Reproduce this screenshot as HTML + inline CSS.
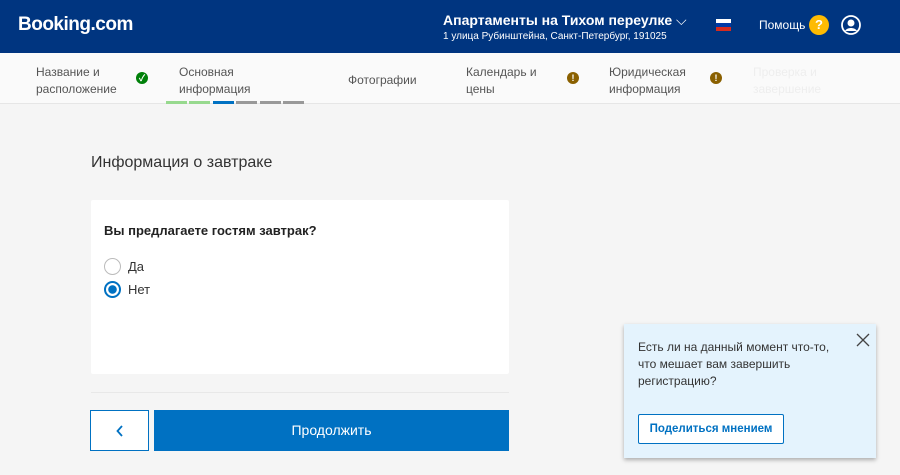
<!DOCTYPE html>
<html><head><meta charset="utf-8"><style>
*{margin:0;padding:0;box-sizing:border-box}
body{width:900px;height:475px;overflow:hidden;background:#f5f5f5;font-family:"Liberation Sans","Noto Sans CJK SC",sans-serif;position:relative;color:#333}
.hd{position:absolute;left:0;top:0;width:900px;height:53px;background:#003580;color:#fff}
.abs{position:absolute}
.nav{position:absolute;top:53px;left:0;width:900px;height:51px;background:#fafafa;border-bottom:1px solid #e6e6e6;font-size:12px;color:#555;line-height:17px}
.dot{position:absolute;width:12px;height:12px;border-radius:50%;color:#fff;font-size:9px;font-weight:bold;text-align:center;line-height:12px}
.bar{position:absolute;top:101px;height:3px;width:21px}
</style></head><body>
<div class="hd">
 <div class="abs" style="left:18px;top:14px;font-size:19px;font-weight:bold;letter-spacing:-0.5px">Booking.com</div>
 <div class="abs" style="left:443px;top:12px;font-size:14px;font-weight:bold">Апартаменты на Тихом переулке <span style="font-weight:normal">⌵</span></div>
 <div class="abs" style="left:443px;top:31px;font-size:10px">1 улица Рубинштейна, Санкт-Петербург, 191025</div>
 <div class="abs" style="left:716px;top:19px;width:15px;height:12px;background:linear-gradient(#fff 0 33%,#0039a6 33% 66%,#d52b1e 66%)"></div>
 <div class="abs" style="left:759px;top:18px;font-size:12px">Помощь</div>
 <div class="abs" style="left:809px;top:15px;width:20px;height:20px;border-radius:50%;background:#febb02;color:#fff;text-align:center;font-size:13px;line-height:20px;font-weight:bold">?</div>
 <svg class="abs" style="left:841px;top:15px" width="20" height="20" viewBox="0 0 20 20"><circle cx="10" cy="10" r="9" fill="none" stroke="#fff" stroke-width="1.8"/><circle cx="10" cy="8" r="3.5" fill="#fff"/><path d="M4 16c2-4 10-4 12 0" fill="#fff"/></svg>
</div>
<div class="nav">
 <div class="abs" style="left:36px;top:11px">Название и<br>расположение</div>
 <div class="dot" style="left:136px;top:19px;background:#008009">✓</div>
 <div class="abs" style="left:179px;top:11px">Основная<br>информация</div>
 <div class="abs" style="left:348px;top:19px">Фотографии</div>
 <div class="abs" style="left:466px;top:11px">Календарь и<br>цены</div>
 <div class="dot" style="left:567px;top:19px;background:#8a6000">!</div>
 <div class="abs" style="left:609px;top:11px">Юридическая<br>информация</div>
 <div class="dot" style="left:710px;top:19px;background:#8a6000">!</div>
 <div class="abs" style="left:753px;top:11px;color:#eee">Проверка и<br>завершение</div>
</div>
<div class="bar" style="left:166px;background:#97d98e"></div>
<div class="bar" style="left:189px;background:#97d98e"></div>
<div class="bar" style="left:213px;background:#0071c2"></div>
<div class="bar" style="left:236px;background:#999"></div>
<div class="bar" style="left:260px;background:#999"></div>
<div class="bar" style="left:283px;background:#999"></div>
<div class="abs" style="left:91px;top:154px;font-size:16px;color:#333">Информация о завтраке</div>
<div class="abs" style="left:91px;top:200px;width:418px;height:174px;background:#fff;border-radius:2px">
 <div class="abs" style="left:13px;top:23px;font-size:13px;font-weight:bold;color:#222">Вы предлагаете гостям завтрак?</div>
 <div class="abs" style="left:13px;top:58px;width:17px;height:17px;border-radius:50%;border:1px solid #bbb"></div>
 <div class="abs" style="left:37px;top:59px;font-size:13px">Да</div>
 <div class="abs" style="left:13px;top:81px;width:17px;height:17px;border-radius:50%;border:2px solid #0071c2;background:radial-gradient(#0071c2 0 4px,#fff 4.5px)"></div>
 <div class="abs" style="left:37px;top:82px;font-size:13px">Нет</div>
</div>
<div class="abs" style="left:91px;top:392px;width:418px;height:1px;background:#e8e8e8"></div>
<div class="abs" style="left:90px;top:410px;width:59px;height:41px;border:1px solid #0071c2;background:#fff"><svg class="abs" style="left:25px;top:14px" width="8" height="12"><path d="M6 1L1.5 6L6 11" fill="none" stroke="#0071c2" stroke-width="1.8"/></svg></div>
<div class="abs" style="left:154px;top:410px;width:355px;height:41px;background:#0071c2;color:#fff;text-align:center;line-height:41px;font-size:14px">Продолжить</div>
<div class="abs" style="left:624px;top:324px;width:252px;height:134px;background:#e4f3fd;box-shadow:0 2px 4px rgba(0,0,0,.3)">
 <div class="abs" style="left:14px;top:15px;font-size:12px;line-height:17px;color:#333">Есть ли на данный момент что-то,<br>что мешает вам завершить<br>регистрацию?</div>
 <svg class="abs" style="left:232px;top:9px" width="14" height="14"><path d="M1 1L13 13M13 1L1 13" stroke="#444" stroke-width="1.3"/></svg>
 <div class="abs" style="left:14px;top:90px;width:146px;height:30px;background:#fff;border:1px solid #0071c2;border-radius:2px;color:#0071c2;font-size:11.5px;font-weight:bold;text-align:center;line-height:28px">Поделиться мнением</div>
</div>
</body></html>
